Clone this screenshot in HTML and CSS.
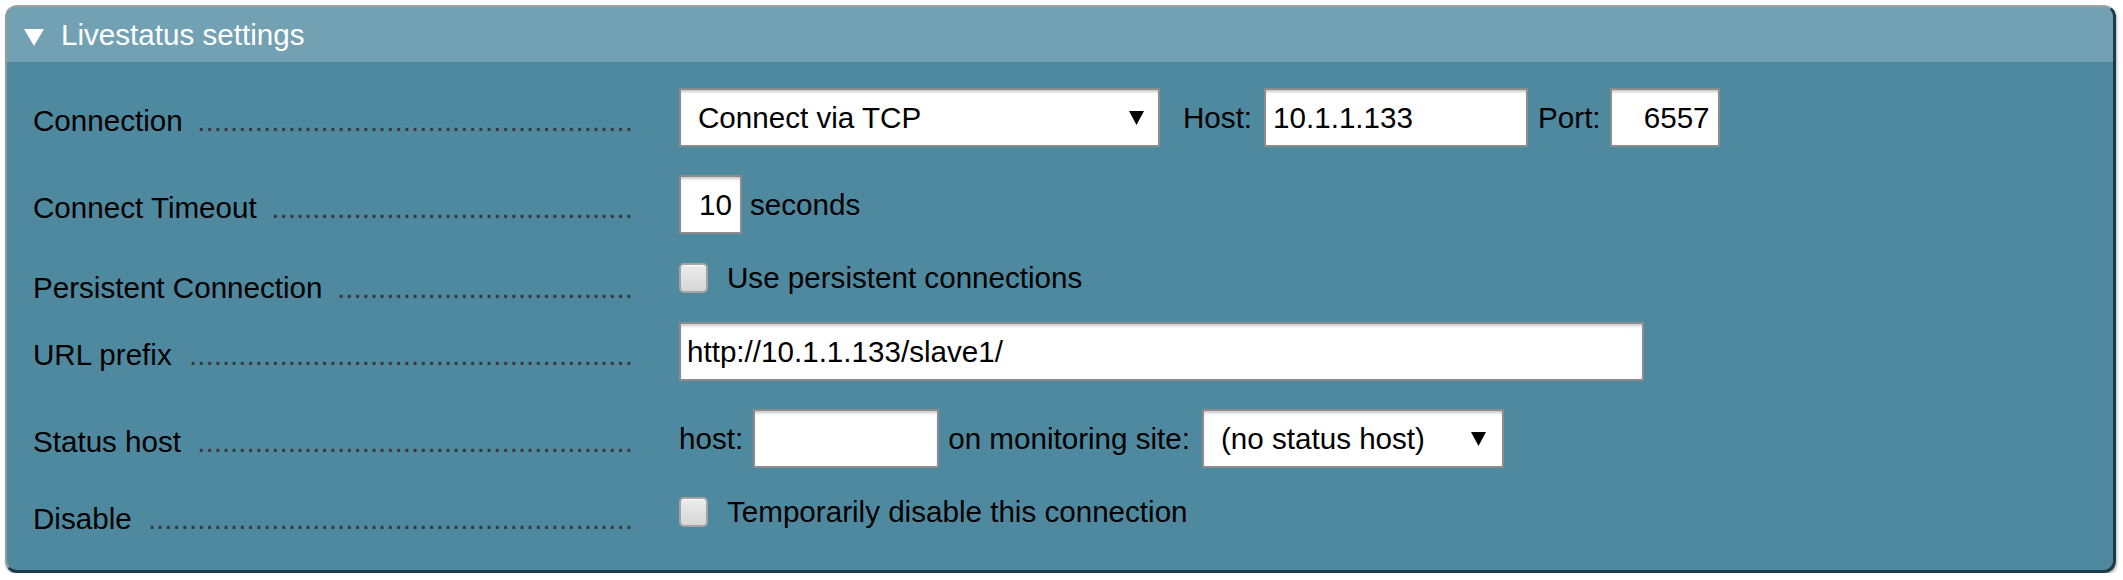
FILE: index.html
```html
<!DOCTYPE html>
<html lang="en">
<head>
<meta charset="utf-8">
<title>Livestatus settings</title>
<link rel="stylesheet" href="styles.css">
</head>
<body>
<div class="box">
  <div class="head">
    <svg class="tri" width="20" height="17" viewBox="0 0 20 17"><polygon points="0,0 20,0 10,17" fill="#ffffff"/></svg>
    <span class="title">Livestatus settings</span>
  </div>
  <div class="form">
    <div class="row">
      <div class="legend"><span class="name">Connection</span><span class="dots">.....................................................</span></div>
      <div class="ctl">
        <span class="sel sel-conn"><select class="select"><option>Connect via TCP</option></select><svg class="arrow" width="15" height="14" viewBox="0 0 15 14"><polygon points="0,0 15,0 7.5,14" fill="#000"/></svg></span>
        <span class="txt t-host">Host:</span><input class="inp host" type="text" value="10.1.1.133"><span class="txt t-port">Port:</span><input class="inp port num" type="text" value="6557">
      </div>
    </div>
    <div class="row">
      <div class="legend"><span class="name">Connect Timeout</span><span class="dots">............................................</span></div>
      <div class="ctl">
        <input class="inp timeout num" type="text" value="10"><span class="txt t-sec">seconds</span>
      </div>
    </div>
    <div class="row check r3">
      <div class="legend"><span class="name">Persistent Connection</span><span class="dots">....................................</span></div>
      <div class="ctl">
        <input class="cb" type="checkbox"><span class="txt t-cb">Use persistent connections</span>
      </div>
    </div>
    <div class="row">
      <div class="legend"><span class="name">URL prefix</span><span class="dots">......................................................</span></div>
      <div class="ctl">
        <input class="inp url" type="text" value="http://10.1.1.133/slave1/">
      </div>
    </div>
    <div class="row">
      <div class="legend"><span class="name">Status host</span><span class="dots">.....................................................</span></div>
      <div class="ctl">
        <span class="txt t-shost">host:</span><input class="inp shost" type="text" value=""><span class="txt t-site">on monitoring site:</span>
        <span class="sel sel-site"><select class="select"><option>(no status host)</option></select><svg class="arrow" width="15" height="14" viewBox="0 0 15 14"><polygon points="0,0 15,0 7.5,14" fill="#000"/></svg></span>
      </div>
    </div>
    <div class="row check r6">
      <div class="legend"><span class="name">Disable</span><span class="dots">...........................................................</span></div>
      <div class="ctl">
        <input class="cb" type="checkbox"><span class="txt t-cb">Temporarily disable this connection</span>
      </div>
    </div>
  </div>
</div>
</body>
</html>
```
FILE: styles.css
```css
html, body {
  margin: 0;
  padding: 0;
  background: #ffffff;
}

body {
  font-family: "Liberation Sans", Arial, sans-serif;
  font-size: 29.6px;
  color: #000;
}

.box {
  margin: 5px 7px 0 5px;
  border-top: 2px solid #9fa3a5;
  border-left: 2px solid #979b9d;
  border-right: 3px solid #1d3b48;
  border-bottom: 3px solid #1d3b48;
  border-radius: 12px;
  background: #4f899f;
  box-shadow: 1px 2px 3px rgba(0, 0, 0, 0.3);
  overflow: hidden;
}

.head {
  height: 55px;
  background: #72a1b4;
  display: flex;
  align-items: center;
  padding-left: 17px;
  color: #ffffff;
}

.tri {
  margin-top: 5px;
  flex: none;
}

.title {
  margin-left: 17px;
  line-height: 34px;
}

.form {
  padding: 12px 0 28px 26px;
}

.row {
  display: grid;
  grid-template-columns: 600px 1fr;
  grid-template-rows: 59px;
  column-gap: 46px;
  align-items: start;
  padding: 14px 0;
}

.row.check {
  grid-template-rows: 32px;
}

.legend {
  display: flex;
  justify-content: space-between;
  margin-top: 16px;
  line-height: 34px;
  height: 34px;
  white-space: nowrap;
}

.r3 .legend {
  margin-top: 9px;
}

.r6 .legend {
  margin-top: 6px;
}

.name {
  flex: none;
}

.dots {
  flex: none;
  color: #383838;
}

.ctl {
  display: flex;
  align-items: center;
  height: 59px;
  white-space: nowrap;
}

.check .ctl {
  height: 32px;
  line-height: 32px;
}

.txt {
  line-height: 34px;
}

.inp,
.select {
  box-sizing: border-box;
  height: 59px;
  margin: 0;
  border: 2px solid #8c8c8c;
  border-radius: 0;
  background: #ffffff;
  font-family: "Liberation Sans", Arial, sans-serif;
  font-size: 29.6px;
  color: #000;
  padding: 0 7px;
  box-shadow: inset 0 3px 3px -1px rgba(0, 0, 0, 0.22);
  outline: none;
}

.num {
  text-align: right;
  padding-right: 8px;
}

.sel {
  position: relative;
  display: inline-flex;
}

.select {
  -webkit-appearance: none;
  appearance: none;
  padding-left: 17px;
}

.arrow {
  position: absolute;
  right: 16px;
  top: 23px;
}

.sel-conn .select { width: 481px; }
.sel-site { margin-left: 12px; }
.sel-site .select { width: 302px; }
.sel-site .arrow { right: 18px; }

.t-host { margin-left: 23px; }
.host { width: 264px; margin-left: 12px; }
.t-port { margin-left: 10px; }
.port { width: 110px; margin-left: 9px; }

.timeout { width: 63px; }
.t-sec { margin-left: 8px; }

.url { width: 965px; padding-left: 6px; }

.shost { width: 186px; margin-left: 10px; }
.t-site { margin-left: 9px; }

.cb {
  -webkit-appearance: none;
  appearance: none;
  box-sizing: border-box;
  width: 29px;
  height: 30px;
  margin: 0;
  border: 2px solid #a3a3a3;
  border-radius: 5px;
  background: linear-gradient(#ececec, #d6d6d6);
  box-shadow: inset 0 1px 0 #ffffff;
  flex: none;
}

.t-cb {
  margin-left: 19px;
  line-height: 32px;
}
```
